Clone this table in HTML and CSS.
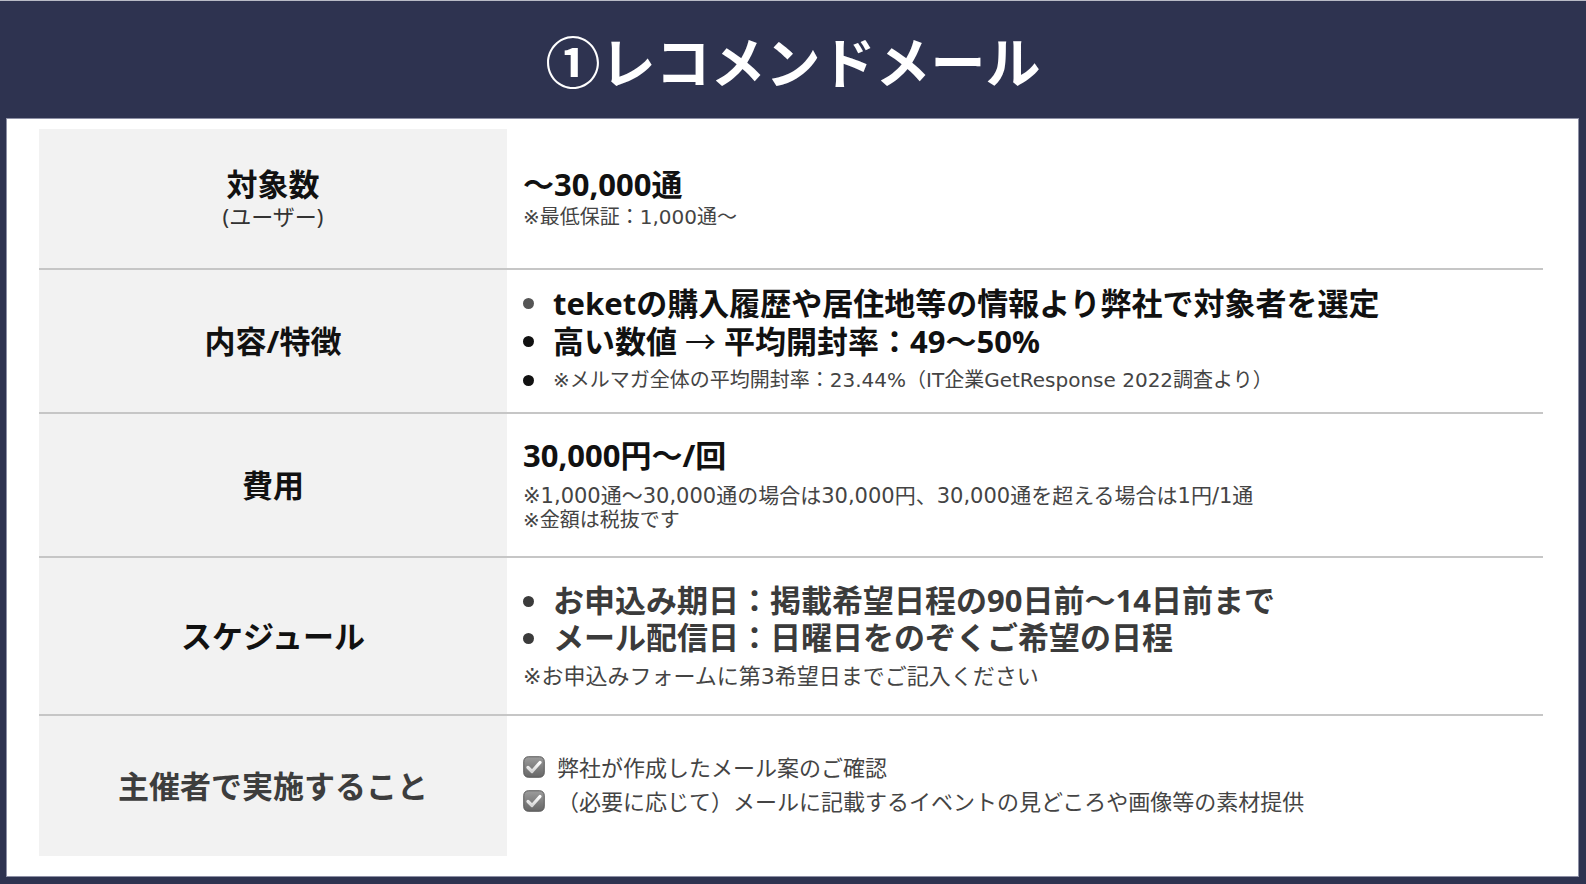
FILE: index.html
```html
<!DOCTYPE html>
<html lang="ja">
<head>
<meta charset="utf-8">
<title>①レコメンドメール</title>
<link rel="stylesheet" href="styles.css">
</head>
<body>
<div class="page">
  <header class="header"><h1 class="title">①レコメンドメール</h1></header>
  <main class="panel">
    <div class="table">
      <div class="row r1">
        <div class="label"><div class="label-main">対象数</div><div class="label-sub">(ユーザー)</div></div>
        <div class="content">
          <div class="big">～30,000通</div>
          <div class="small s1">※最低保証：1,000通～</div>
        </div>
      </div>
      <div class="row r2">
        <div class="label"><div class="label-main">内容/特徴</div></div>
        <div class="content">
          <ul class="bullets">
            <li class="big dot-gray">teketの購入履歴や居住地等の情報より弊社で対象者を選定</li>
            <li class="big">高い数値 <span class="arrow">→</span> 平均開封率：49～50%</li>
            <li class="small note">※メルマガ全体の平均開封率：23.44%（IT企業GetResponse 2022調査より）</li>
          </ul>
        </div>
      </div>
      <div class="row r3">
        <div class="label"><div class="label-main">費用</div></div>
        <div class="content">
          <div class="big">30,000円～/回</div>
          <div class="small s3a">※1,000通～30,000通の場合は30,000円、30,000通を超える場合は1円/1通</div>
          <div class="small s3b">※金額は税抜です</div>
        </div>
      </div>
      <div class="row r4">
        <div class="label"><div class="label-main">スケジュール</div></div>
        <div class="content">
          <ul class="bullets dark">
            <li class="big">お申込み期日：掲載希望日程の90日前～14日前まで</li>
            <li class="big">メール配信日：日曜日をのぞくご希望の日程</li>
          </ul>
          <div class="small s4">※お申込みフォームに第3希望日までご記入ください</div>
        </div>
      </div>
      <div class="row r5">
        <div class="label"><div class="label-main gray">主催者で実施すること</div></div>
        <div class="content">
          <ul class="checks">
            <li><svg class="check" viewBox="0 0 22 22" width="22" height="22"><defs><linearGradient id="cg" x1="0" y1="0" x2="0" y2="1"><stop offset="0" stop-color="#9c9c9c"/><stop offset="1" stop-color="#666666"/></linearGradient><linearGradient id="ck" x1="0" y1="0" x2="0" y2="1"><stop offset="0" stop-color="#ffffff"/><stop offset="1" stop-color="#d6d6d6"/></linearGradient></defs><rect x="0.75" y="0.75" width="20.5" height="20.5" rx="4.5" fill="url(#cg)" stroke="#5a5a5a" stroke-width="1"/><path d="M5 11.5 L9 15.5 L17 6.5" fill="none" stroke="url(#ck)" stroke-width="3.2" stroke-linecap="round" stroke-linejoin="round"/></svg><span>弊社が作成したメール案のご確認</span></li>
            <li><svg class="check" viewBox="0 0 22 22" width="22" height="22"><rect x="0.75" y="0.75" width="20.5" height="20.5" rx="4.5" fill="url(#cg)" stroke="#5a5a5a" stroke-width="1"/><path d="M5 11.5 L9 15.5 L17 6.5" fill="none" stroke="url(#ck)" stroke-width="3.2" stroke-linecap="round" stroke-linejoin="round"/></svg><span>（必要に応じて）メールに記載するイベントの見どころや画像等の素材提供</span></li>
          </ul>
        </div>
      </div>
    </div>
  </main>
</div>
</body>
</html>
```
FILE: styles.css
```css
html, body {
  margin: 0;
  padding: 0;
}
body {
  background: #2e3350;
  font-family: "Noto Sans", "Noto Sans CJK JP", sans-serif;
  color: #111;
}
.page {
  width: 1586px;
  height: 884px;
  display: flex;
  flex-direction: column;
}
.header {
  height: 117px;
  border-top: 1px solid #b9bbc6;
  display: flex;
  align-items: center;
  justify-content: center;
}
.title {
  margin: 0;
  color: #fff;
  font-family: "Noto Sans CJK JP", sans-serif;
  font-size: 55px;
  font-weight: 700;
  line-height: 1;
}
.panel {
  box-sizing: border-box;
  height: 759px;
  margin: 0 7px 0 6px;
  background: #fff;
  border: 1px solid #8d90a5;
  padding: 10px 35px 0 32px;
}
.table {
  display: flex;
  flex-direction: column;
}
.row {
  display: grid;
  grid-template-columns: 468px 1fr;
  border-bottom: 2px solid #c6c6c6;
}
.r1 { height: 139px; }
.r2 { height: 142px; }
.r3 { height: 142px; }
.r4 { height: 156px; }
.r5 { height: 140px; border-bottom: none; }
.label {
  background: #f2f2f2;
  display: flex;
  flex-direction: column;
  align-items: center;
  justify-content: center;
}
.label-main {
  font-size: 31px;
  font-weight: 700;
  line-height: 34px;
  color: #111;
}
.label-main.gray { color: #3d3d3d; }
.label-sub {
  font-size: 22px;
  line-height: 28px;
  margin-top: 1px;
  color: #333;
}
.content {
  padding-left: 16px;
  display: flex;
  flex-direction: column;
  justify-content: center;
}
.big {
  font-size: 31px;
  font-weight: 700;
  line-height: 34px;
  color: #111;
}
.arrow {
  font-family: "Noto Sans CJK JP", sans-serif;
  font-weight: 400;
  line-height: 1;
}
.small {
  font-family: "DejaVu Sans", "Noto Sans CJK JP", sans-serif;
  font-size: 20px;
  line-height: 26px;
  color: #444;
}
.s1 { margin-top: 3px; }
.s3a { margin-top: 12px; line-height: 24px; font-size: 21px; }
.s3b { line-height: 24px; }
.s4 { margin-top: 8px; font-size: 22px; }
.bullets {
  list-style: none;
  margin: 0;
  padding: 0;
}
.bullets li {
  position: relative;
  padding-left: 30px;
  line-height: 38px;
}
.bullets li::before {
  content: "";
  position: absolute;
  left: 0;
  top: 50%;
  width: 11px;
  height: 11px;
  margin-top: -5px;
  border-radius: 50%;
  background: #111;
}
.bullets li.dot-gray::before { background: #555; }
.bullets li.note { margin-top: 2px; line-height: 36px; }
.bullets.dark li { color: #3b3b3b; line-height: 37px; }
.bullets.dark li::before { background: #3b3b3b; }
.checks {
  list-style: none;
  margin: 0;
  padding: 0 0 4px 0;
}
.checks li {
  display: flex;
  align-items: center;
  gap: 12px;
  font-size: 22px;
  line-height: 34px;
  color: #444;
}
.check {
  flex: none;
  display: block;
}
```
